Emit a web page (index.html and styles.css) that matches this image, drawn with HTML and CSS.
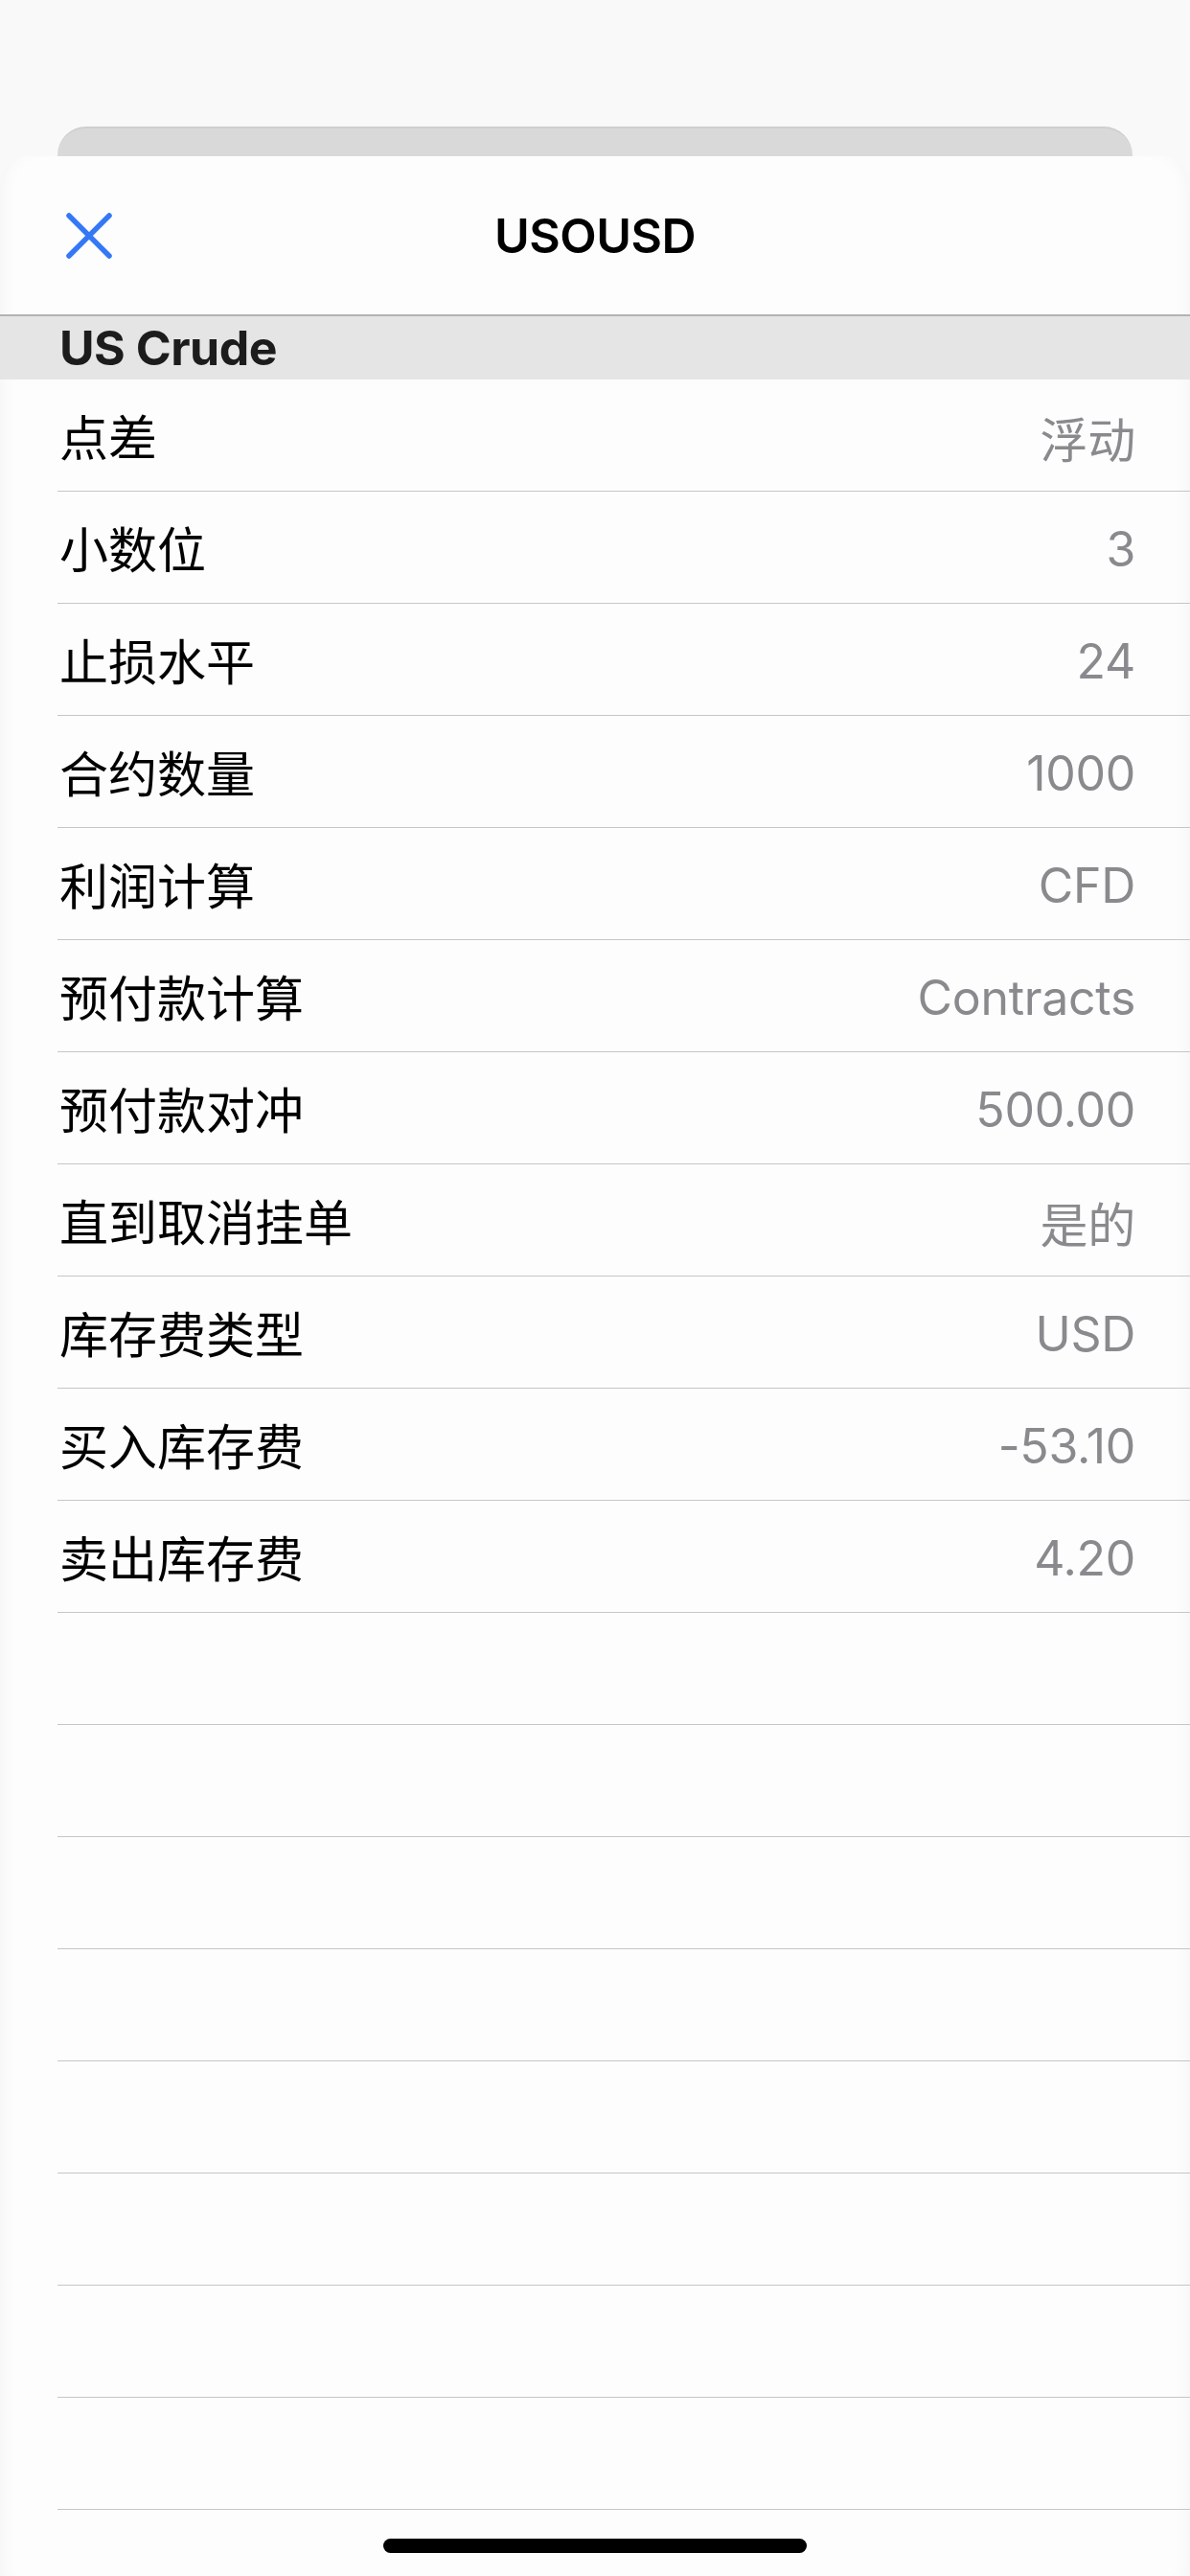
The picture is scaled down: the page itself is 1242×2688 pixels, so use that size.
FILE: index.html
```html
<!DOCTYPE html>
<html lang="zh-CN">
<head>
<meta charset="utf-8">
<title>USOUSD</title>
<link rel="stylesheet" href="styles.css">
</head>
<body>
<div class="screen">
  <div class="behind-card"></div>
  <main class="sheet">
    <header class="sheet-header">
      <div class="header-left">
        <button class="close-btn" aria-label="关闭">
          <svg width="48" height="48" viewBox="0 0 48 48">
            <path d="M3 3 L45 45 M45 3 L3 45" stroke="#3478f6" stroke-width="5.5" stroke-linecap="round" fill="none"/>
          </svg>
        </button>
      </div>
      <h1 class="title">USOUSD</h1>
      <div class="header-right"></div>
    </header>
    <div class="section-title">US Crude</div>
    <ul class="list">
      <li class="row"><span class="label">点差</span><span class="value">浮动</span></li>
      <li class="row"><span class="label">小数位</span><span class="value">3</span></li>
      <li class="row"><span class="label">止损水平</span><span class="value">24</span></li>
      <li class="row"><span class="label">合约数量</span><span class="value">1000</span></li>
      <li class="row"><span class="label">利润计算</span><span class="value">CFD</span></li>
      <li class="row"><span class="label">预付款计算</span><span class="value">Contracts</span></li>
      <li class="row"><span class="label">预付款对冲</span><span class="value">500.00</span></li>
      <li class="row"><span class="label">直到取消挂单</span><span class="value">是的</span></li>
      <li class="row"><span class="label">库存费类型</span><span class="value">USD</span></li>
      <li class="row"><span class="label">买入库存费</span><span class="value">-53.10</span></li>
      <li class="row"><span class="label">卖出库存费</span><span class="value">4.20</span></li>
      <li class="row empty"></li>
      <li class="row empty"></li>
      <li class="row empty"></li>
      <li class="row empty"></li>
      <li class="row empty"></li>
      <li class="row empty"></li>
      <li class="row empty"></li>
      <li class="row empty"></li>
    </ul>
    <div class="home-area"><div class="home-indicator"></div></div>
  </main>
</div>
</body>
</html>
```
FILE: styles.css
```css
* { box-sizing: border-box; }
html, body {
  margin: 0;
  padding: 0;
  background: #f9f9f9;
}
body {
  font-family: "Inter", "Noto Sans CJK SC", "Liberation Sans", sans-serif;
  color: #000;
}
.screen {
  width: 1242px;
  min-height: 2688px;
  padding-top: 132px;
  display: flex;
  flex-direction: column;
}
.behind-card {
  margin: 0 60px;
  height: 31px;
  background: #d9d9d9;
  border-top: 2px solid #cfcfcf;
  border-radius: 30px 30px 0 0;
}
.sheet {
  flex: 1;
  background: #fdfdfd;
  border-radius: 30px 30px 0 0;
  box-shadow: inset 14px 0 20px -14px rgba(0,0,0,0.05), inset -14px 0 20px -14px rgba(0,0,0,0.05);
  display: flex;
  flex-direction: column;
}
.sheet-header {
  height: 167px;
  border-bottom: 2px solid #b3b3b3;
  display: grid;
  grid-template-columns: 1fr auto 1fr;
  align-items: center;
}
.header-left {
  padding-left: 69px;
  display: flex;
  align-items: center;
}
.close-btn {
  border: 0;
  background: none;
  padding: 0;
  margin: 0;
  width: 48px;
  height: 48px;
  display: block;
}
.close-btn svg { display: block; }
.title {
  margin: 0;
  font-size: 50px;
  font-weight: 600;
  letter-spacing: -0.5px;
  color: #000;
}
.section-title {
  height: 66px;
  background: #e5e5e5;
  padding-left: 62px;
  display: flex;
  align-items: center;
  font-size: 50px;
  font-weight: 700;
  letter-spacing: -0.5px;
  color: #1c1c1c;
}
.list {
  list-style: none;
  margin: 0;
  padding: 0 0 0 60px;
}
.row {
  height: 117px;
  border-bottom: 1px solid #c6c6c6;
  display: flex;
  align-items: center;
  justify-content: space-between;
  padding: 0 57px 0 2px;
  font-size: 50px;
}
.label {
  color: #000;
  font-size: 51px;
}
.value {
  color: #8a8a8e;
  letter-spacing: -0.3px;
  padding-top: 4px;
}
.home-area {
  display: flex;
  justify-content: center;
  padding-top: 30px;
}
.home-indicator {
  width: 442px;
  height: 15px;
  border-radius: 8px;
  background: #000;
}
```
